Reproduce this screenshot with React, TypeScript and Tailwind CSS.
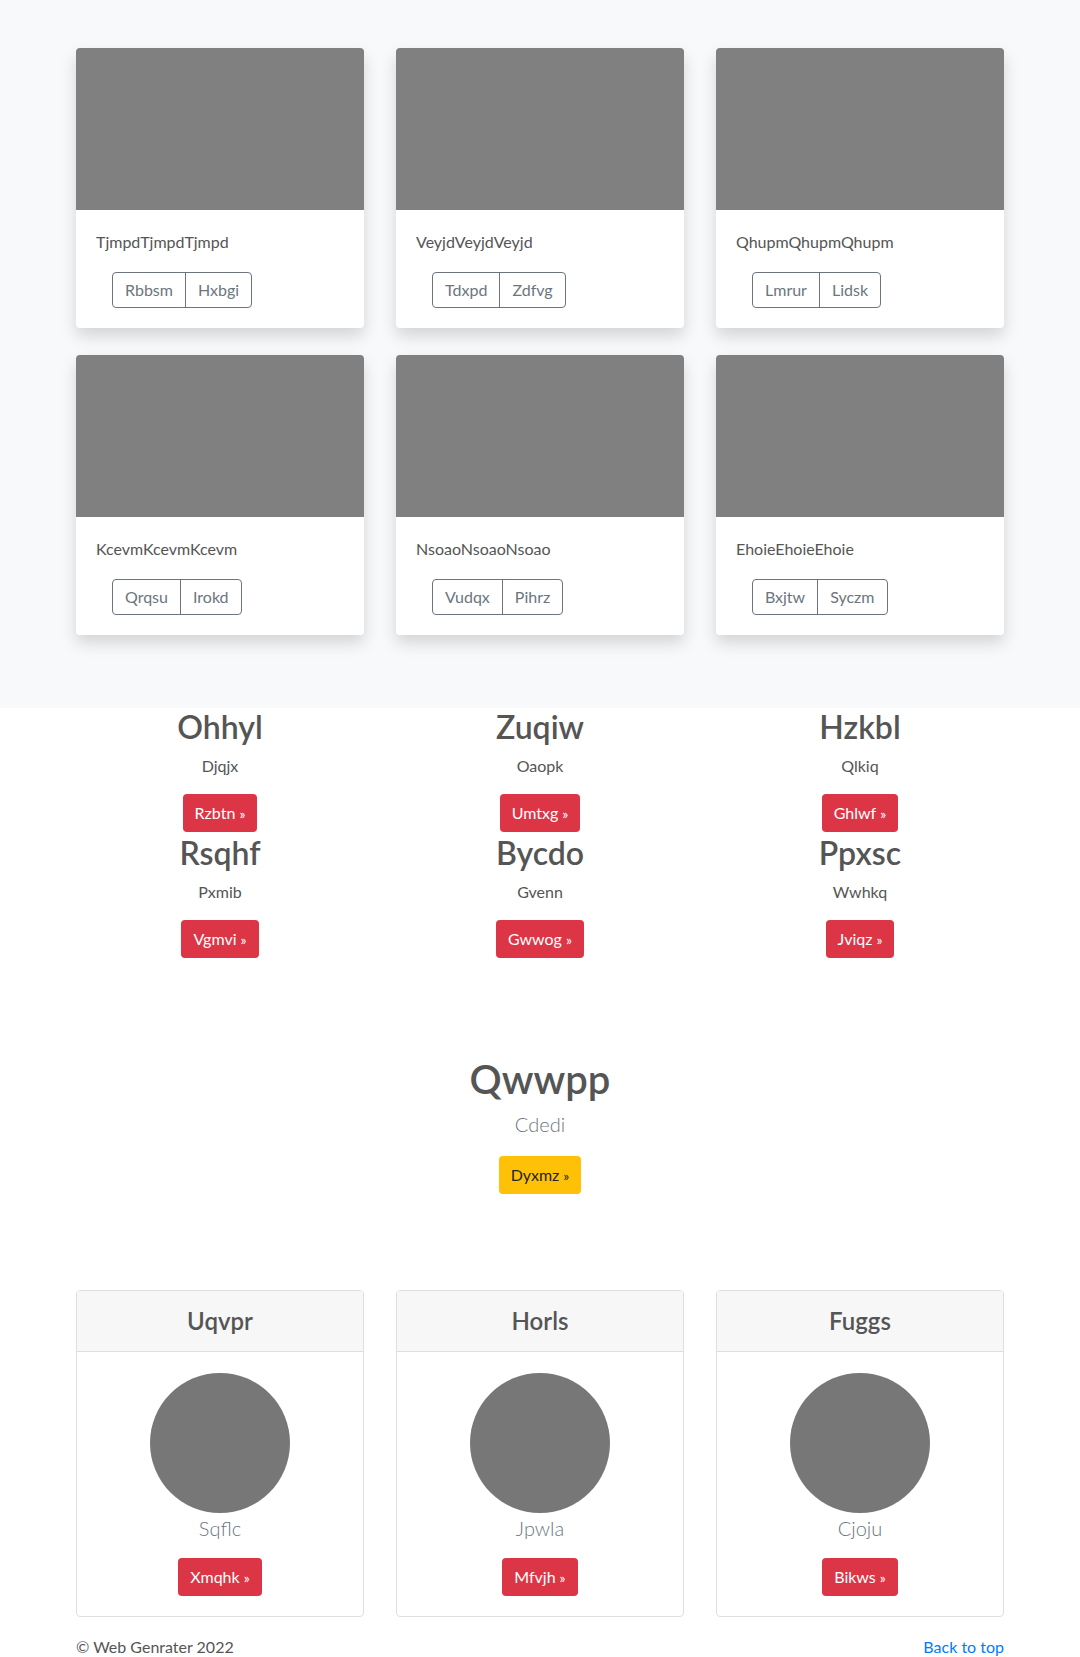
const albumCards = [
  { title: "TjmpdTjmpdTjmpd", a: "Rbbsm", b: "Hxbgi" },
  { title: "VeyjdVeyjdVeyjd", a: "Tdxpd", b: "Zdfvg" },
  { title: "QhupmQhupmQhupm", a: "Lmrur", b: "Lidsk" },
  { title: "KcevmKcevmKcevm", a: "Qrqsu", b: "Irokd" },
  { title: "NsoaoNsoaoNsoao", a: "Vudqx", b: "Pihrz" },
  { title: "EhoieEhoieEhoie", a: "Bxjtw", b: "Syczm" },
];

const features = [
  { title: "Ohhyl", text: "Djqjx", btn: "Rzbtn" },
  { title: "Zuqiw", text: "Oaopk", btn: "Umtxg" },
  { title: "Hzkbl", text: "Qlkiq", btn: "Ghlwf" },
  { title: "Rsqhf", text: "Pxmib", btn: "Vgmvi" },
  { title: "Bycdo", text: "Gvenn", btn: "Gwwog" },
  { title: "Ppxsc", text: "Wwhkq", btn: "Jviqz" },
];

const people = [
  { name: "Uqvpr", text: "Sqflc", btn: "Xmqhk" },
  { name: "Horls", text: "Jpwla", btn: "Mfvjh" },
  { name: "Fuggs", text: "Cjoju", btn: "Bikws" },
];

const AlbumCard = ({ title, a, b }: { title: string; a: string; b: string }) => (
  <div className="bg-white rounded-[4px] overflow-hidden shadow-[0_8px_16px_rgba(0,0,0,0.15)]">
    <div className="h-[162px] bg-[#808080]" />
    <div className="p-5">
      <p className="text-base leading-6 mb-[18px]">{title}</p>
      <div className="ml-4 inline-flex h-9 border border-[#6c757d] rounded-[4px] text-[#6c757d] text-base">
        <span className="px-3 flex items-center">{a}</span>
        <span className="px-3 flex items-center border-l border-[#6c757d]">{b}</span>
      </div>
    </div>
  </div>
);

const RedButton = ({ label }: { label: string }) => (
  <span className="inline-flex h-[38px] items-center px-3 rounded-[4px] bg-[#dc3545] text-white text-base">
    {label}
    <span className="ml-1 text-[14px]">»</span>
  </span>
);

export default function App() {
  return (
    <div className="min-h-screen bg-white text-[#555] font-['Lato','Liberation_Sans',sans-serif]">
      {/* album */}
      <section className="bg-[#f8f9fa] pt-12 pb-[73px]">
        <div className="w-[928px] mx-auto grid grid-cols-3 gap-x-8 gap-y-[27px]">
          {albumCards.map((c) => (
            <AlbumCard key={c.title} {...c} />
          ))}
        </div>
      </section>

      {/* features */}
      <section>
        <div className="w-[928px] mx-auto grid grid-cols-3 gap-x-8">
          {features.map((f) => (
            <div key={f.title} className="flex flex-col items-center text-center pb-[2px]">
              <h2 className="text-[32px] leading-[38px] font-semibold mb-2">{f.title}</h2>
              <p className="text-base leading-6 mb-4">{f.text}</p>
              <RedButton label={f.btn} />
            </div>
          ))}
        </div>
      </section>

      {/* hero */}
      <section className="pt-[95px] pb-[96px] flex flex-col items-center text-center">
        <h1 className="text-[40px] leading-[48px] font-semibold mb-[6px]">Qwwpp</h1>
        <p className="text-xl leading-[30px] font-light text-[#6c757d] mb-[17px]">Cdedi</p>
        <span className="inline-flex h-[38px] items-center px-3 rounded-[4px] bg-[#ffc107] text-[#212529] text-base">
          Dyxmz
          <span className="ml-1 text-[14px]">»</span>
        </span>
      </section>

      {/* people */}
      <section>
        <div className="w-[928px] mx-auto grid grid-cols-3 gap-x-8">
          {people.map((p) => (
            <div key={p.name} className="border border-[#dfdfdf] rounded-[4px] overflow-hidden bg-white">
              <div className="h-[61px] bg-[#f7f7f7] border-b border-[#dfdfdf] flex items-center justify-center">
                <h4 className="text-2xl font-semibold">{p.name}</h4>
              </div>
              <div className="pt-[21px] px-5 pb-5 flex flex-col items-center">
                <div className="w-[140px] h-[140px] rounded-full bg-[#777777]" />
                <p className="text-xl leading-[30px] font-light text-[#6c757d] mb-[15px]">{p.text}</p>
                <RedButton label={p.btn} />
              </div>
            </div>
          ))}
        </div>
      </section>

      {/* footer */}
      <footer className="w-[928px] mx-auto pt-[18px] pb-4 flex justify-between text-base leading-6">
        <span>© Web Genrater 2022</span>
        <a href="#" className="text-[#007bff]">Back to top</a>
      </footer>
    </div>
  );
}
